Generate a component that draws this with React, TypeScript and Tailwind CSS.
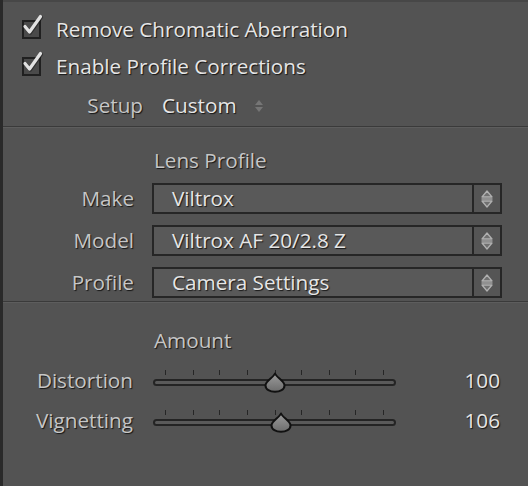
import React from "react";

const FONT = { fontFamily: '"Open Sans", "Noto Sans", sans-serif' };

function Check() {
  return (
    <div className="relative shrink-0 w-[19px] h-[19px] bg-[#202020] p-[2px]">
      <div className="w-full h-full bg-[#4a4a4a]" />
      <svg className="absolute left-[-1px] top-[-6px] overflow-visible" width="23" height="23" viewBox="0 0 23 23">
        <path d="M4 12.5 L8.5 18 L19.5 2.5" fill="none" stroke="#1a1a1a" strokeWidth="3.6" strokeLinecap="round" strokeLinejoin="round" transform="translate(0.8,0.8)" opacity="0.55" />
        <path d="M4 12.5 L8.5 18 L19.5 2.5" fill="none" stroke="#e2e2e2" strokeWidth="3.2" strokeLinecap="round" strokeLinejoin="round" />
      </svg>
    </div>
  );
}

function UpDown({ color = "#b0b0b0" }: { color?: string }) {
  return (
    <svg width="14" height="20" viewBox="0 0 14 20">
      <path d="M7 2 L12 8 L2 8 Z" fill="#707070" stroke={color} strokeWidth="1.3" strokeLinejoin="round" />
      <line x1="1.5" y1="10" x2="12.5" y2="10" stroke={color} strokeWidth="1.3" />
      <path d="M7 18 L12 12 L2 12 Z" fill="#707070" stroke={color} strokeWidth="1.3" strokeLinejoin="round" />
    </svg>
  );
}

function Dropdown({ label, value }: { label: string; value: string }) {
  return (
    <div className="flex items-center h-[31px]">
      <div className="w-[131px] text-right text-[#c6c6c6] [text-shadow:1px_1px_1px_rgba(0,0,0,0.75)]">{label}</div>
      <div className="ml-[18px] w-[350px] h-[31px] flex border-2 border-[#262626] bg-[#595959]">
        <div className="flex-1 flex items-center pl-[18px] text-[#e6e6e6] [text-shadow:1px_1px_1px_rgba(0,0,0,0.75)]">{value}</div>
        <div className="w-[28px] border-l-2 border-[#262626] bg-[#555555] flex items-center justify-center">
          <UpDown />
        </div>
      </div>
    </div>
  );
}

const TICKS = [12, 40, 66, 94, 122, 148, 176, 202, 230];

function Slider({ label, value, pos }: { label: string; value: string; pos: number }) {
  return (
    <div className="flex items-center h-[32px]">
      <div className="w-[130px] text-right text-[#c6c6c6] [text-shadow:1px_1px_1px_rgba(0,0,0,0.75)]">{label}</div>
      <div className="relative ml-[20px] w-[243px] h-[32px]">
        {TICKS.map((t) => (
          <div key={t} className="absolute top-[6px] w-[1px] h-[5px] bg-[#262626]" style={{ left: t }} />
        ))}
        <div className="absolute left-0 right-0 top-[15px] h-[7px] rounded-full border-2 border-[#242424] bg-[#5a5a5a]" />
        <svg className="absolute top-[8px]" style={{ left: pos - 11 }} width="22" height="21" viewBox="0 0 22 21">
          <defs>
            <linearGradient id={"g" + label} x1="0" y1="0" x2="0" y2="1">
              <stop offset="0" stopColor="#9c9c9c" />
              <stop offset="1" stopColor="#6c6c6c" />
            </linearGradient>
          </defs>
          <path d="M11 1.5 C12.5 5.5 20.5 9 20.5 13.5 C20.5 17.5 16 19.8 11 19.8 C6 19.8 1.5 17.5 1.5 13.5 C1.5 9 9.5 5.5 11 1.5 Z" fill={`url(#g${label})`} stroke="#111" strokeWidth="2" strokeLinejoin="round" />
        </svg>
      </div>
      <div className="ml-auto mr-[28px] text-[#e6e6e6] [text-shadow:1px_1px_1px_rgba(0,0,0,0.75)]">{value}</div>
    </div>
  );
}

function Separator() {
  return <div className="h-[2px] border-t border-[#3a3a3a] border-b border-b-[#5d5d5d]" />;
}

export default function App() {
  return (
    <div style={FONT} className="w-[528px] h-[486px] bg-[#535353] border-l-[3px] border-[#2a2a2a] text-[20.7px] leading-none overflow-hidden">
      <div className="h-[2px] bg-[#474747]" />
      <div className="h-[9px]" />
      <div className="flex items-center h-[36px] pl-[19px]">
        <Check />
        <span className="ml-[15px] text-[#e6e6e6] [text-shadow:1px_1px_1px_rgba(0,0,0,0.75)]">Remove Chromatic Aberration</span>
      </div>
      <div className="flex items-center h-[38px] pl-[19px]">
        <Check />
        <span className="ml-[15px] text-[#e6e6e6] [text-shadow:1px_1px_1px_rgba(0,0,0,0.75)]">Enable Profile Corrections</span>
      </div>
      <div className="flex items-center h-[41px]">
        <div className="w-[140px] text-right text-[#c6c6c6] [text-shadow:1px_1px_1px_rgba(0,0,0,0.75)]">Setup</div>
        <div className="ml-[19px] text-[#e6e6e6] [text-shadow:1px_1px_1px_rgba(0,0,0,0.75)]">Custom</div>
        <svg className="ml-[17px]" width="10" height="16" viewBox="0 0 10 16">
          <path d="M5 2 L9 7 L1 7 Z" fill="#767676" />
          <path d="M5 14 L9 9 L1 9 Z" fill="#767676" />
        </svg>
      </div>
      <Separator />
      <div className="h-[16px]" />
      <div className="flex items-center h-[32px] pl-[151px] text-[#c6c6c6] [text-shadow:1px_1px_1px_rgba(0,0,0,0.75)]">Lens Profile</div>
      <div className="h-[7px]" />
      <div className="flex flex-col gap-[11px]">
        <Dropdown label="Make" value="Viltrox" />
        <Dropdown label="Model" value="Viltrox AF 20/2.8 Z" />
        <Dropdown label="Profile" value="Camera Settings" />
      </div>
      <div className="h-[3px]" />
      <Separator />
      <div className="h-[21px]" />
      <div className="flex items-center h-[32px] pl-[151px] text-[#c6c6c6] [text-shadow:1px_1px_1px_rgba(0,0,0,0.75)]">Amount</div>
      <div className="h-[8px]" />
      <Slider label="Distortion" value="100" pos={122} />
      <div className="h-[8px]" />
      <Slider label="Vignetting" value="106" pos={128} />
    </div>
  );
}
